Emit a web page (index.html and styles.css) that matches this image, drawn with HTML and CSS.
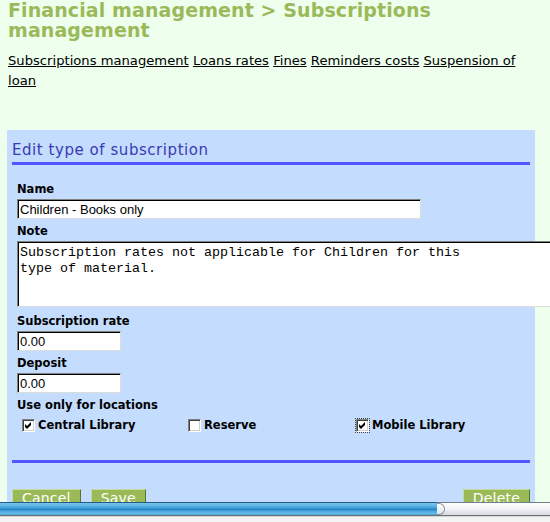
FILE: index.html
```html
<!DOCTYPE html>
<html>
<head>
<meta charset="utf-8">
<title>Subscriptions management</title>
<link rel="stylesheet" href="styles.css">
</head>
<body>
<div class="page">
  <h1 class="title">Financial management &gt; Subscriptions management</h1>
  <nav class="tabs"><a href="#">Subscriptions management</a><a href="#">Loans rates</a><a href="#">Fines</a><a href="#">Reminders costs</a><a href="#">Suspension of loan</a></nav>
  <form class="panel">
    <h2 class="panel-title">Edit type of subscription</h2>
    <div class="fields">
      <label class="lbl lbl-first">Name</label>
      <input class="field field-name" type="text" value="Children - Books only">
      <label class="lbl">Note</label>
      <textarea class="field note">Subscription rates not applicable for Children for this
type of material.</textarea>
      <label class="lbl">Subscription rate</label>
      <input class="field field-num" type="text" value="0.00">
      <label class="lbl">Deposit</label>
      <input class="field field-num" type="text" value="0.00">
      <label class="lbl">Use only for locations</label>
      <div class="locs">
        <div class="loc"><span class="box"><svg viewBox="0 0 13 13" width="13" height="13"><path d="M3 5 L5 7 L9 3 L9 6 L5 10 L3 8 Z" fill="#000"/></svg></span>Central Library</div>
        <div class="loc"><span class="box"></span>Reserve</div>
        <div class="loc"><span class="box box-focus"><svg viewBox="0 0 13 13" width="13" height="13"><path d="M3 5 L5 7 L9 3 L9 6 L5 10 L3 8 Z" fill="#000"/></svg></span>Mobile Library</div>
      </div>
    </div>
    <div class="rule"></div>
    <div class="actions">
      <div class="actions-left">
        <button class="btn" type="button">Cancel</button>
        <button class="btn" type="button">Save</button>
      </div>
      <button class="btn" type="button">Delete</button>
    </div>
  </form>
</div>
<div class="hscroll">
  <div class="hscroll-track">
    <div class="thumb"></div>
    <div class="thumb-cap"></div>
  </div>
  <div class="hscroll-foot"></div>
</div>
</body>
</html>
```
FILE: styles.css
```css
html {
  overflow: hidden;
}
body {
  margin: 0;
  background: #eeffee;
  font-family: "DejaVu Sans", Verdana, sans-serif;
  color: #000;
}
.page {
  padding: 0 8px;
}
.title {
  margin: 0;
  font-size: 19px;
  line-height: 20px;
  font-weight: bold;
  letter-spacing: 0.1px;
  color: #9aba5a;
}
.tabs {
  margin-top: 11px;
  font-size: 13.15px;
  line-height: 20px;
}
.tabs a {
  margin-right: 4.2px;
  color: #000;
  text-decoration: underline;
}
.panel {
  margin: 39px 0 0 -1px;
  width: 528px;
  box-sizing: border-box;
  padding: 11px 5px 12px;
  background: #c4dcfe;
}
.panel-title {
  margin: 0;
  padding-bottom: 3px;
  border-bottom: 3px solid #5555ff;
  font-size: 15px;
  line-height: 18px;
  font-weight: normal;
  letter-spacing: 0.55px;
  color: #3a3ab4;
}
.fields {
  padding: 16px 0 0 5px;
}
.lbl {
  display: block;
  margin-top: 4px;
  font-size: 11.5px;
  font-weight: bold;
  line-height: 16px;
}
.lbl-first {
  margin-top: 0;
}
.field {
  display: block;
  margin-top: 2px;
  box-sizing: border-box;
  height: 20px;
  border: 1px solid;
  border-color: #808080 #dcdcdc #dcdcdc #808080;
  box-shadow: inset 1px 1px 0 #000;
  background: #fff;
  font-family: "Liberation Sans", Arial, sans-serif;
  font-size: 13px;
  padding: 0 2px;
  color: #000;
  outline: none;
  border-radius: 0;
}
.field-name {
  width: 404px;
}
.field-num {
  width: 104px;
}
.note {
  width: 545px;
  height: 66px;
  margin-bottom: 6px;
  padding: 3px 2px;
  resize: none;
  overflow: hidden;
  font-family: "Liberation Mono", "Courier New", monospace;
  font-size: 13.33px;
  line-height: 16px;
}
.locs {
  display: grid;
  grid-template-columns: 166px 168px 1fr;
  margin: 4px 0 0 5px;
  font-size: 11.5px;
  font-weight: bold;
  line-height: 16px;
}
.loc {
  display: flex;
  align-items: center;
  gap: 3px;
}
.box {
  display: block;
  width: 13px;
  height: 13px;
  box-sizing: border-box;
  background: #fff;
  border: 1px solid;
  border-color: #808080 #ffffff #ffffff #808080;
  box-shadow: inset 1px 1px 0 #404040, inset -1px -1px 0 #d4d0c8;
}
.box svg {
  display: block;
  margin: -1px;
}
.box-focus {
  outline: 1px dotted #444;
  outline-offset: 0;
}
.rule {
  height: 3px;
  margin-top: 27px;
  background: #5555ff;
}
.actions {
  display: flex;
  justify-content: space-between;
  margin-top: 26px;
}
.actions-left {
  display: flex;
  gap: 10px;
}
.btn {
  margin: 0;
  padding: 0 9px 3px;
  background: #9aba58;
  color: #fff;
  font-family: "DejaVu Sans", Verdana, sans-serif;
  font-size: 14px;
  line-height: 17px;
  letter-spacing: 0.2px;
  border: 1px solid;
  border-color: #c6daa0 #56762a #56762a #c6daa0;
  border-radius: 0;
}
.hscroll {
  position: fixed;
  left: 0;
  right: 0;
  bottom: 0;
  height: 20px;
  display: flex;
  flex-direction: column;
}
.hscroll-track {
  display: flex;
  height: 14px;
  box-sizing: border-box;
  border-top: 1px solid #6f7f90;
  border-bottom: 1px solid #6a7078;
  background: linear-gradient(to bottom, #ffffff 0%, #f2f2f6 50%, #d8d8e0 100%);
}
.thumb {
  width: 437px;
  height: 100%;
  background: linear-gradient(to bottom, #7cc4ea 0%, #5cb4e4 25%, #3a9ad6 45%, #2878b8 52%, #3a9ad6 60%, #64bce8 85%, #4aa2d8 100%);
  box-shadow: 0 -1px 0 #1e5a8a;
}
.thumb-cap {
  width: 8px;
  height: 100%;
  box-sizing: border-box;
  background: linear-gradient(to bottom, #ffffff, #e0e4ec);
  border: 1px solid #8890a0;
  border-left: none;
  border-radius: 0 7px 7px 0;
}
.hscroll-foot {
  flex: 1;
  background: #f3f3f3;
  border-top: 1px solid #d6d6d6;
}
```
